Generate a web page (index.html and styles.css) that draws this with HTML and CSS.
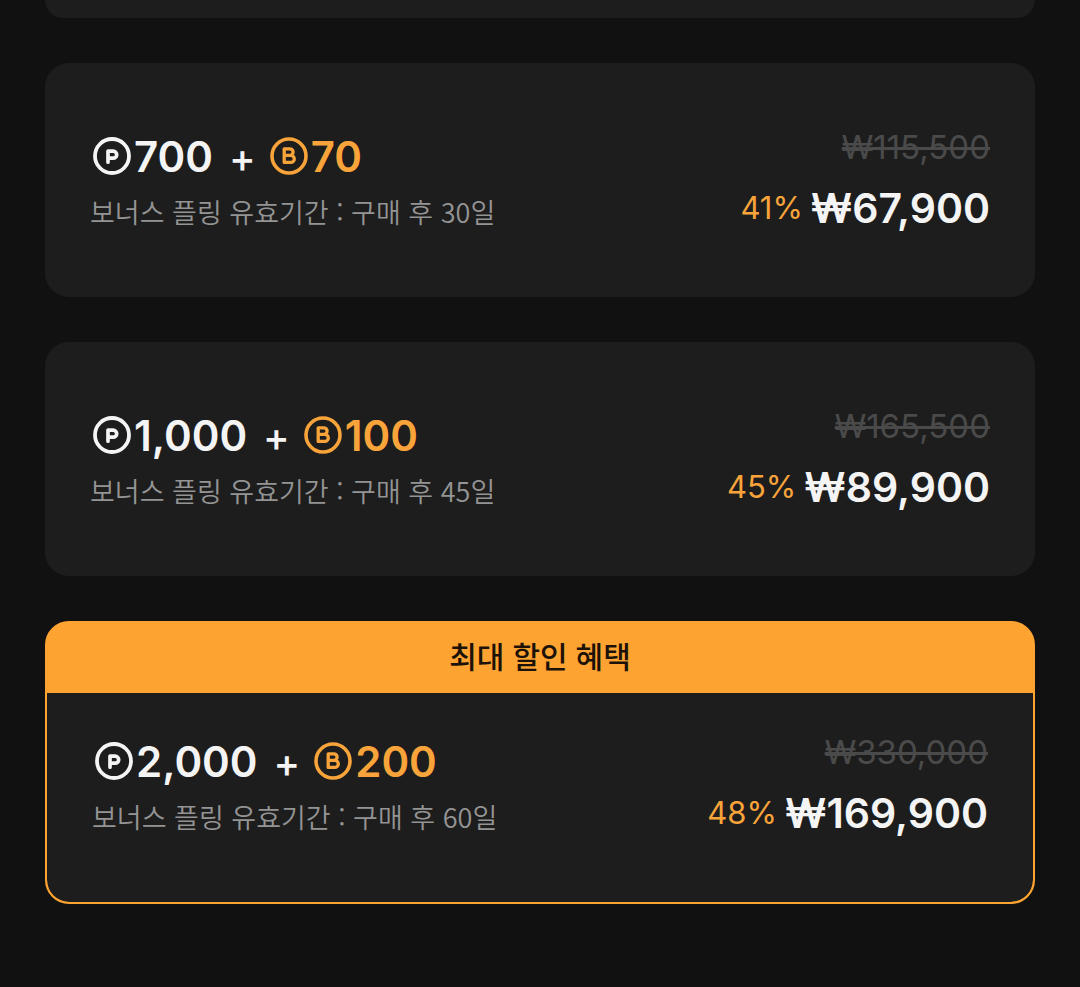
FILE: index.html
```
<!DOCTYPE html>
<html lang="ko">
<head>
    <meta charset="UTF-8">
    <meta name="viewport" content="width=device-width, initial-scale=1">
    <title>플링 충전</title>
    <link rel="stylesheet" href="styles.css">
</head>
<body>
    <!-- Coin icons -->
    <svg class="sprite" aria-hidden="true">
        <symbol id="coin-p" viewBox="0 0 38 38">
            <circle cx="19" cy="19" r="17" stroke-width="3.8"/>
            <path d="M15 25.2V14.2H20.2A3.5 3.5 0 0 1 20.2 21.2H15" stroke-width="3.7"/>
        </symbol>
        <symbol id="coin-b" viewBox="0 0 38 38">
            <circle cx="19" cy="19" r="17" stroke-width="3.6"/>
            <path d="M14.2 11.8H19.8A3.3 3.3 0 0 1 19.8 18.4H14.2M19.8 18.4H20.8A3.5 3.5 0 0 1 20.8 25.4H14.2V11.8" stroke-width="3.3"/>
        </symbol>
    </svg>

    <main class="products">
        <div class="card card-prev"></div>

        <article class="card">
            <div class="card-body">
                <div class="info">
                    <div class="amount">
                        <svg class="coin"><use href="#coin-p"/></svg>
                        <span>700</span>
                        <span class="plus">+</span>
                        <svg class="coin bonus"><use href="#coin-b"/></svg>
                        <span class="bonus">70</span>
                    </div>
                    <p class="period">보너스 플링 유효기간 : 구매 후 30일</p>
                </div>
                <div class="pricing">
                    <del class="old-price">₩115,500</del>
                    <div class="sale"><span class="rate">41%</span><strong class="price">₩67,900</strong></div>
                </div>
            </div>
        </article>

        <article class="card">
            <div class="card-body">
                <div class="info">
                    <div class="amount">
                        <svg class="coin"><use href="#coin-p"/></svg>
                        <span>1,000</span>
                        <span class="plus">+</span>
                        <svg class="coin bonus"><use href="#coin-b"/></svg>
                        <span class="bonus">100</span>
                    </div>
                    <p class="period">보너스 플링 유효기간 : 구매 후 45일</p>
                </div>
                <div class="pricing">
                    <del class="old-price">₩165,500</del>
                    <div class="sale"><span class="rate">45%</span><strong class="price">₩89,900</strong></div>
                </div>
            </div>
        </article>

        <article class="card card-best">
            <h2 class="banner">최대 할인 혜택</h2>
            <div class="card-body">
                <div class="info">
                    <div class="amount">
                        <svg class="coin"><use href="#coin-p"/></svg>
                        <span>2,000</span>
                        <span class="plus">+</span>
                        <svg class="coin bonus"><use href="#coin-b"/></svg>
                        <span class="bonus">200</span>
                    </div>
                    <p class="period">보너스 플링 유효기간 : 구매 후 60일</p>
                </div>
                <div class="pricing">
                    <del class="old-price">₩330,000</del>
                    <div class="sale"><span class="rate">48%</span><strong class="price">₩169,900</strong></div>
                </div>
            </div>
        </article>
    </main>
</body>
</html>
```
FILE: styles.css
```
* {
    box-sizing: border-box;
}

body {
    margin: 0;
    background: #111111;
    color: #f4f4f4;
    font-family: Inter, "Noto Sans CJK KR", sans-serif;
}

.sprite {
    position: absolute;
    width: 0;
    height: 0;
}

.products {
    display: flex;
    flex-direction: column;
    gap: 45px;
    padding: 0 45px 45px;
}

.card {
    background: #1d1d1d;
    border-radius: 24px;
    overflow: hidden;
}

/* end of the previous card */
.card-prev {
    height: 18px;
    border-radius: 0 0 24px 24px;
}

.card-body {
    display: flex;
    justify-content: space-between;
    padding: 54px 45px 58px;
}

.info {
    padding-top: 9px;
}

.amount {
    display: flex;
    align-items: center;
    height: 60px;
    font-size: 42px;
    font-weight: 600;
}

.coin {
    width: 38px;
    height: 38px;
    margin: 0 3px;
    fill: none;
    stroke: currentColor;
    stroke-linecap: round;
    stroke-linejoin: round;
}

.bonus {
    color: #f9a43a;
}

.plus {
    margin: 0 11px 0 16px;
    padding-top: 2px;
    font-size: 40px;
    font-weight: 500;
}

.period {
    margin: 0;
    color: #949494;
    font-family: "Noto Sans CJK KR", sans-serif;
    font-size: 27px;
    font-weight: 350;
    line-height: 52px;
}

.pricing {
    text-align: right;
}

.old-price {
    display: block;
    color: #4a4a4a;
    font-size: 33px;
    line-height: 60px;
    text-decoration-thickness: 3px;
}

.sale {
    display: flex;
    align-items: center;
    justify-content: flex-end;
    gap: 8px;
    line-height: 62px;
}

.rate {
    color: #f9a43a;
    font-size: 31px;
}

.price {
    font-size: 41px;
    font-weight: 600;
}

/* orange sits behind the whole card so the rounded top has no seam */
.card-best {
    border: 2px solid #fca331;
    background: #fca331;
}

.card-best .card-body {
    padding-top: 29px;
    border-radius: 0 0 22px 22px;
    background: #1d1d1d;
}

.banner {
    margin: 0;
    padding-bottom: 2px;
    color: #1d1208;
    font-size: 30px;
    font-weight: 500;
    line-height: 68px;
    text-align: center;
}
```
